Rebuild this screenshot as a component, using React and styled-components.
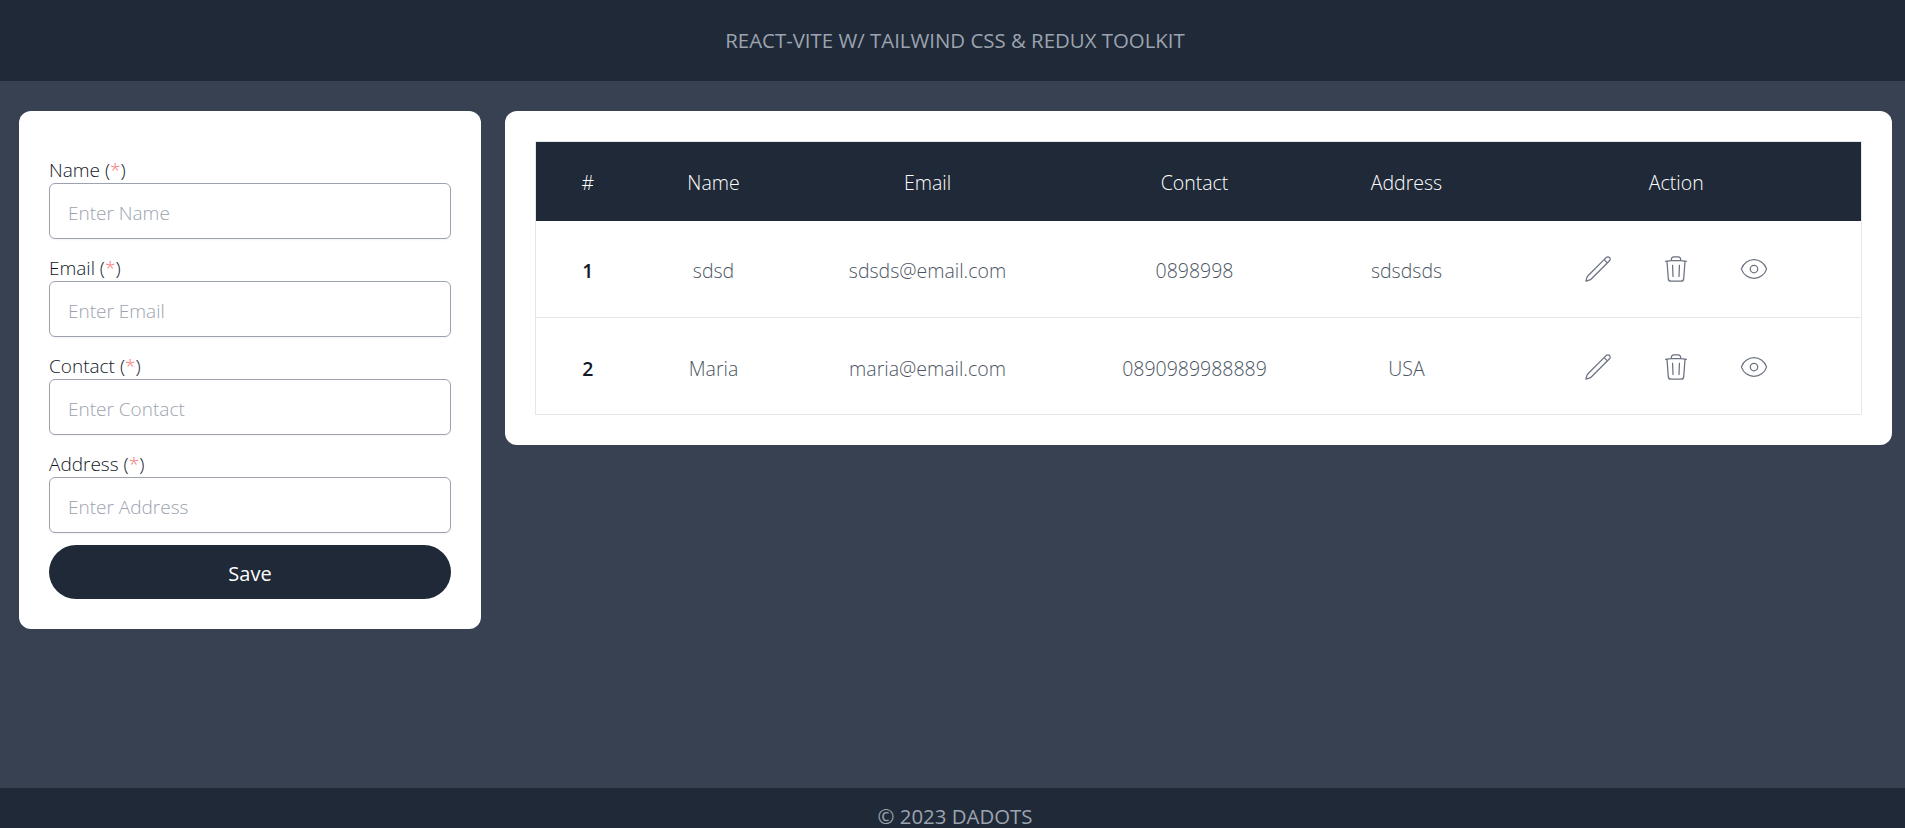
import React from "react";
import styled, { createGlobalStyle } from "styled-components";
import { HiOutlinePencil, HiOutlineTrash, HiOutlineEye } from "react-icons/hi2";

const fields = ["Name", "Email", "Contact", "Address"];

const users = [
  { id: 1, name: "sdsd", email: "sdsds@email.com", contact: "0898998", address: "sdsdsds" },
  { id: 2, name: "Maria", email: "maria@email.com", contact: "0890989988889", address: "USA" },
];

const columns = [
  { label: "#", width: 104 },
  { label: "Name", width: 148 },
  { label: "Email", width: 280 },
  { label: "Contact", width: 254 },
  { label: "Address", width: 170 },
  { label: "Action", width: 370 },
];

function App() {
  return (
    <Page>
      <GlobalStyle />
      <Header>REACT-VITE W/ TAILWIND CSS &amp; REDUX TOOLKIT</Header>
      <Main>
        <FormCard>
          {fields.map((field) => (
            <Field key={field}>
              <Label>
                {field} (<Required>*</Required>)
              </Label>
              <Input placeholder={`Enter ${field}`} />
            </Field>
          ))}
          <SaveButton>Save</SaveButton>
        </FormCard>
        <TableCard>
          <Table>
            <colgroup>
              {columns.map((col) => (
                <Col key={col.label} $width={col.width} />
              ))}
            </colgroup>
            <thead>
              <tr>
                {columns.map((col) => (
                  <Th key={col.label}>{col.label}</Th>
                ))}
              </tr>
            </thead>
            <tbody>
              {users.map((user) => (
                <Row key={user.id}>
                  <IdCell>{user.id}</IdCell>
                  <Td>{user.name}</Td>
                  <Td>{user.email}</Td>
                  <Td>{user.contact}</Td>
                  <Td>{user.address}</Td>
                  <ActionCell>
                    <Actions>
                      <HiOutlinePencil size={30} strokeWidth={1} />
                      <HiOutlineTrash size={30} strokeWidth={1} />
                      <HiOutlineEye size={30} strokeWidth={1} />
                    </Actions>
                  </ActionCell>
                </Row>
              ))}
            </tbody>
          </Table>
        </TableCard>
      </Main>
      <PageFooter>© 2023 DADOTS</PageFooter>
    </Page>
  );
}

export default App;

const GlobalStyle = createGlobalStyle`
  * {
    box-sizing: border-box;
  }

  body {
    margin: 0;
    font-family: "Open Sans", "Noto Sans", sans-serif;
  }
`;

const Page = styled.div`
  height: 828px;
  display: flex;
  flex-direction: column;
  background-color: #374151;
  overflow: hidden;
`;

const Header = styled.header`
  height: 81px;
  flex-shrink: 0;
  display: flex;
  align-items: center;
  justify-content: center;
  padding: 0 0 2px 5px;
  background-color: #1f2937;
  color: #9ca3af;
  font-size: 20.4px;
  font-weight: 400;
`;

const Main = styled.main`
  flex: 1;
  display: flex;
  align-items: flex-start;
  gap: 24px;
  padding: 30px 13px 0 19px;
`;

const PageFooter = styled.footer`
  height: 40px;
  flex-shrink: 0;
  padding: 16px 0 0 5px;
  text-align: center;
  background-color: #1f2937;
  color: #9ca3af;
  font-size: 20.4px;
  line-height: 24px;
`;

const FormCard = styled.form`
  width: 462px;
  flex-shrink: 0;
  padding: 46px 30px 30px;
  background-color: #fff;
  border-radius: 12px;
`;

const Field = styled.div`
  margin-bottom: 16px;

  &:last-of-type {
    margin-bottom: 12px;
  }
`;

const Label = styled.label`
  display: block;
  height: 26px;
  line-height: 26px;
  font-size: 19px;
  font-weight: 300;
  color: #111827;
`;

const Required = styled.span`
  color: #f87171;
`;

const Input = styled.input`
  display: block;
  width: 100%;
  height: 56px;
  padding: 4px 18px 0;
  border: 1px solid #9ca3af;
  border-radius: 6px;
  font-family: inherit;
  font-size: 19px;
  font-weight: 300;
  box-shadow: 0 1px 2px rgba(0, 0, 0, 0.05);

  &::placeholder {
    color: #9ca3af;
  }
`;

const SaveButton = styled.button`
  display: block;
  width: 100%;
  height: 54px;
  padding: 2px 0 0;
  border: none;
  border-radius: 27px;
  background-color: #1f2937;
  color: #fff;
  font-family: inherit;
  font-size: 20px;
  font-weight: 400;
`;

const TableCard = styled.section`
  flex: 1;
  padding: 30px;
  background-color: #fff;
  border-radius: 12px;
`;

const Table = styled.table`
  width: 100%;
  table-layout: fixed;
  border-collapse: collapse;
  border: 1px solid #e5e7eb;
`;

const Col = styled.col`
  width: ${(props) => props.$width}px;
`;

const Th = styled.th`
  height: 79px;
  padding-top: 4px;
  background-color: #1f2937;
  color: #fff;
  font-size: 19.5px;
  font-weight: 300;
  text-align: center;
`;

const Row = styled.tr`
  height: 97px;
  border-bottom: 1px solid #e5e7eb;
`;

const Td = styled.td`
  padding-top: 5px;
  color: #4b5563;
  font-size: 19.5px;
  font-weight: 300;
  text-align: center;
`;

const IdCell = styled(Td)`
  color: #111827;
  font-weight: 600;
`;

const ActionCell = styled(Td)`
  padding-top: 2px;
`;

const Actions = styled.div`
  display: flex;
  justify-content: center;
  gap: 48px;
  color: #6b7280;
`;
